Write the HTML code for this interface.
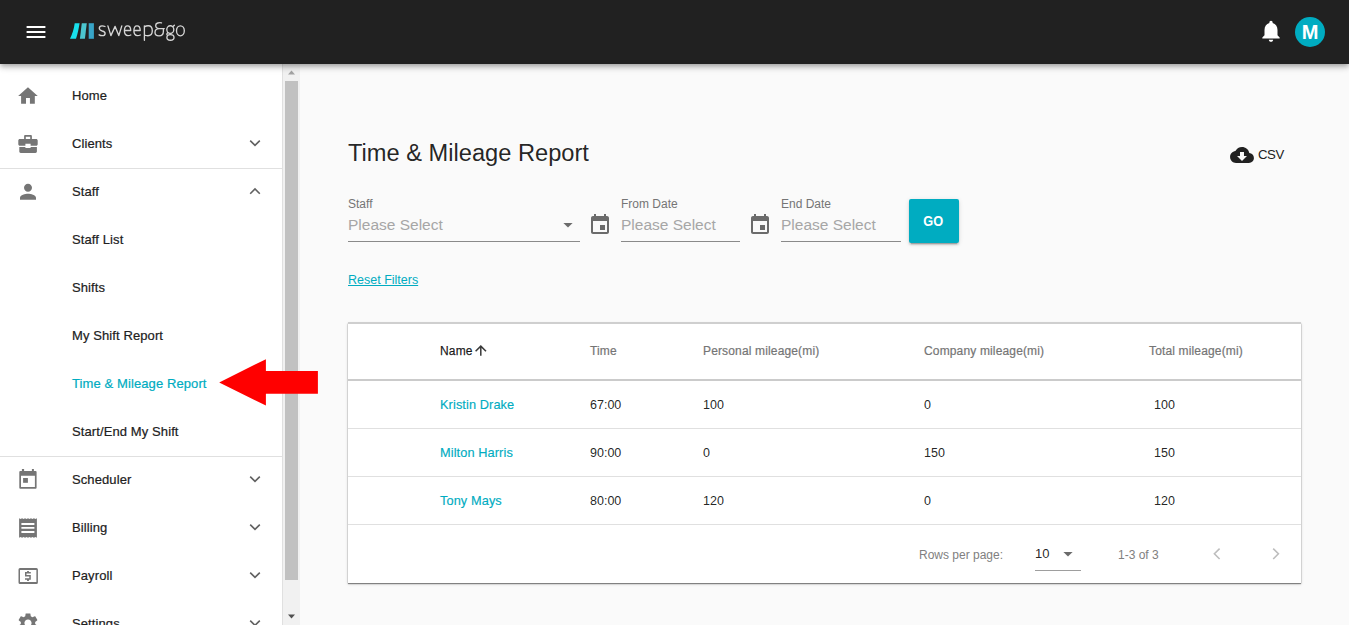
<!DOCTYPE html>
<html><head><meta charset="utf-8">
<style>
*{box-sizing:border-box;margin:0;padding:0}
html,body{width:1349px;height:625px;overflow:hidden;background:#fafafa;font-family:"Liberation Sans",sans-serif;color:rgba(0,0,0,.87)}
.abs{position:absolute}
#hdr{position:absolute;left:0;top:0;width:1349px;height:64px;background:#212121;box-shadow:0 2px 4px -1px rgba(0,0,0,.2),0 4px 5px 0 rgba(0,0,0,.14),0 1px 10px 0 rgba(0,0,0,.12);z-index:5}
#side{position:absolute;left:0;top:64px;width:283px;height:561px;background:#fff;border-right:1px solid #e0e0e0;z-index:2}
#sb{position:absolute;left:283px;top:64px;width:17px;height:561px;background:#f1f1f1;z-index:2}
.item{position:absolute;left:0;width:282px;height:48px;font-size:13px;line-height:50px;color:#212121;-webkit-text-stroke:0.2px currentColor;letter-spacing:0.1px}
.item .t{position:absolute;left:72px;top:0}
.item svg.ic{position:absolute;left:16px;top:12px}
.item svg.ch{position:absolute;left:243px;top:12px}
.div{position:absolute;left:0;width:282px;height:1px;background:#e0e0e0}
#main{position:absolute;left:300px;top:64px;width:1049px;height:561px}

.hd{position:absolute;top:0;height:56px;line-height:56px;font-size:12px;color:#757575;white-space:nowrap;-webkit-text-stroke:0.2px currentColor;letter-spacing:0.15px}
.cl{position:absolute;height:48px;line-height:48px;font-size:12.5px;color:rgba(0,0,0,.87);white-space:nowrap}
.lk{color:#00acc1;font-size:12.75px;letter-spacing:0.1px;-webkit-text-stroke:0.15px currentColor}
.ft{position:absolute;top:203px;height:58px;line-height:58px;font-size:12px;color:#808080;white-space:nowrap}
</style></head>
<body>
<div id="hdr">
  <svg class="abs" style="left:24px;top:20px" width="24" height="24" viewBox="0 0 24 24"><path fill="#fff" d="M2.6 18h18.8v-2H2.6zm0-5h18.8v-2H2.6zm0-7v2h18.8V6H2.6z"/></svg>
  <svg class="abs" style="left:0;top:0" width="200" height="50" viewBox="0 0 200 50">
<path fill="#19e0ec" d="M74.7 23.2H79.6C78.6 29 77.6 34 76 38.8H70C72.2 34 74 29 74.7 23.2z"/>
<path fill="#4bc6cf" d="M81.8 23.2H86.8L84.9 38.8H79.9z"/>
<path fill="#38a5c8" d="M88.7 23.2H93.9V38.8H88.7z"/>
<g fill="none" stroke="#d6d6d6" stroke-width="1.35" stroke-linecap="round" stroke-linejoin="round">
<path d="M105 26.5C104 26 103 25.8 102 25.8C100.3 25.8 99.3 26.8 99.3 28.3C99.3 30.1 100.8 30.6 102.3 31C104 31.4 105.1 32 105.1 33.4C105.1 34.9 104 35.6 102.2 35.6C101 35.6 100 35.3 99.1 34.8"/>
<path d="M107.9 25.9L110.9 35.6L115.1 26.4L118.8 35.6L121.8 25.9"/>
<path d="M124.4 30.5H130.7C130.7 27.5 129.5 25.8 127.5 25.8C125.5 25.8 124.4 27.8 124.4 30.8C124.4 34 125.6 35.6 128 35.6C129 35.6 130 35.4 130.8 35"/>
<path d="M133.9 30.5H140.2C140.2 27.5 139 25.8 137 25.8C135 25.8 133.9 27.8 133.9 30.8C133.9 34 135.1 35.6 137.5 35.6C138.5 35.6 139.5 35.4 140.3 35"/>
<path d="M144.4 25.8V40.2M144.4 26.9C145.5 26.1 146.8 25.7 148.2 25.7C151 25.7 152.3 27.8 152.3 30.7C152.3 33.8 150.8 35.7 147.8 35.7C146.5 35.7 145.3 35.4 144.4 35"/>
<path d="M161.5 22.8C159 22.5 155.7 22.8 155.7 25.3C155.7 27.4 157.5 28.6 159.2 28.6H164.3M159.2 28.6C156.6 28.6 155 30.4 155 32.5C155 34.8 156.8 35.8 159 35.8C161.5 35.8 163.4 34.5 163.4 31.2V28.6"/>
<ellipse cx="170.3" cy="29.6" rx="3.5" ry="3.9"/>
<path d="M173 26.6L174.4 25.2M167.8 32.6C167 33.3 166.8 34 166.9 34.6M170.3 34.6C168.3 34.6 166.9 35.6 166.9 37.5C166.9 39.3 168.3 40.2 170.4 40.2C172.6 40.2 174 39.3 174 37.4C174 35.6 172.6 34.6 170.3 34.6"/>
<ellipse cx="180.4" cy="30.8" rx="3.9" ry="5"/>
</g></svg>
  <svg class="abs" style="left:1258px;top:18px" width="26" height="26" viewBox="0 0 24 24"><path fill="#fff" d="M12 22c1.1 0 2-.9 2-2h-4c0 1.1.89 2 2 2zm6-6v-5c0-3.07-1.64-5.64-4.5-6.32V4c0-.83-.67-1.5-1.5-1.5s-1.5.67-1.5 1.5v.68C7.63 5.36 6 7.92 6 11v5l-2 2v1h16v-1l-2-2z"/></svg>
  <div class="abs" style="left:1295px;top:17px;width:30px;height:30px;border-radius:50%;background:#00acc1;color:#fff;font-size:20px;font-weight:bold;text-align:center;line-height:30px">M</div>
</div>

<div id="side">
<div class="item" style="top:7px"><svg class="ic" width="24" height="24" viewBox="0 0 24 24" fill="#757575"><path transform="translate(0.2,1.2) scale(0.98)" d="M10 20v-6h4v6h5v-8h3L12 3 2 12h3v8z"/></svg><span class="t">Home</span></div>
<div class="item" style="top:55px"><svg class="ic" width="24" height="24" viewBox="0 0 24 24" fill="#757575"><path fill-rule="evenodd" d="M8.1 8.1V5.2C8.1 4.5 8.6 4 9.3 4h5.4c.7 0 1.2.5 1.2 1.2v2.9h-1.7V5.8H9.8v2.3z"/><path d="M3.8 8.1h16.4c.8 0 1.5.7 1.5 1.5v3.7c0 .8-.7 1.5-1.5 1.5H14.6V12.7H9.4v2.1H3.8c-.8 0-1.5-.7-1.5-1.5V9.6c0-.8.7-1.5 1.5-1.5z"/><path d="M3.3 16.1h6.1v1h5.2v-1h6.3v4.4c0 .8-.6 1.4-1.4 1.4H4.7c-.8 0-1.4-.6-1.4-1.4z"/></svg><span class="t">Clients</span><svg class="ch" width="24" height="24" viewBox="0 0 24 24"><path d="M7.2 9.6L12 14.4L16.8 9.6" fill="none" stroke="#616161" stroke-width="1.6"/></svg></div>
<div class="item" style="top:103px"><svg class="ic" width="24" height="24" viewBox="0 0 24 24" fill="#757575"><path transform="translate(0,0.8)" d="M12 12c2.21 0 4-1.79 4-4s-1.79-4-4-4-4 1.79-4 4 1.790 4 4 4zm0 2c-2.67 0-8 1.34-8 4v2h16v-2c0-2.66-5.33-4-8-4z"/></svg><span class="t">Staff</span><svg class="ch" width="24" height="24" viewBox="0 0 24 24"><path d="M7.2 14.8L12 10L16.8 14.8" fill="none" stroke="#616161" stroke-width="1.6"/></svg></div>
<div class="item" style="top:151px"><span class="t">Staff List</span></div>
<div class="item" style="top:199px"><span class="t">Shifts</span></div>
<div class="item" style="top:247px"><span class="t">My Shift Report</span></div>
<div class="item" style="top:295px;color:#00acc1"><span class="t">Time &amp; Mileage Report</span></div>
<div class="item" style="top:343px"><span class="t">Start/End My Shift</span></div>
<div class="item" style="top:391px"><svg class="ic" width="24" height="24" viewBox="0 0 24 24" fill="#757575"><path d="M5.9 2.1h2.2V4.5H5.9zM15.9 2.1h2v2.4h-2z"/><path fill-rule="evenodd" d="M4.3 4h15.3a1 1 0 0 1 1 1v15.8a1 1 0 0 1-1 1H4.3a1 1 0 0 1-1-1V5a1 1 0 0 1 1-1zM5 8.8V20.1h13.9V8.8z"/><rect x="7.1" y="11" width="4.8" height="4.8"/></svg><span class="t">Scheduler</span><svg class="ch" width="24" height="24" viewBox="0 0 24 24"><path d="M7.2 9.6L12 14.4L16.8 9.6" fill="none" stroke="#616161" stroke-width="1.6"/></svg></div>
<div class="item" style="top:439px"><svg class="ic" width="24" height="24" viewBox="0 0 24 24" fill="#757575"><path fill-rule="evenodd" d="M3.10 3.30 L4.58 4.10 L6.07 3.30 L7.55 4.10 L9.03 3.30 L10.52 4.10 L12.00 3.30 L13.48 4.10 L14.97 3.30 L16.45 4.10 L17.93 3.30 L19.42 4.10 L20.90 3.30 L20.90 22.70 L19.42 21.90 L17.93 22.70 L16.45 21.90 L14.97 22.70 L13.48 21.90 L12.00 22.70 L10.52 21.90 L9.03 22.70 L7.55 21.90 L6.07 22.70 L4.58 21.90 L3.10 22.70z M5.4 8.1v1.9h13v-1.9zM5.4 12.1v1.7h13v-1.7zM5.4 16.1v1.8h13v-1.8z"/></svg><span class="t">Billing</span><svg class="ch" width="24" height="24" viewBox="0 0 24 24"><path d="M7.2 9.6L12 14.4L16.8 9.6" fill="none" stroke="#616161" stroke-width="1.6"/></svg></div>
<div class="item" style="top:487px"><svg class="ic" width="24" height="24" viewBox="0 0 24 24" fill="#757575"><path fill-rule="evenodd" d="M4 5h16.4a1.5 1.5 0 0 1 1.5 1.5v12.9a1.5 1.5 0 0 1-1.5 1.5H4a1.5 1.5 0 0 1-1.5-1.5V6.5A1.5 1.5 0 0 1 4 5zM4 7.1V18.9h16.4V7.1z"/><path d="M11.1 8.1h1.8V9h1.9v1.6H10.5v1.5h4.3v4.6H12.9v1.2h-1.8v-1.2H9v-1.5h4.3v-1.6H9V9h2.1z"/></svg><span class="t">Payroll</span><svg class="ch" width="24" height="24" viewBox="0 0 24 24"><path d="M7.2 9.6L12 14.4L16.8 9.6" fill="none" stroke="#616161" stroke-width="1.6"/></svg></div>
<div class="item" style="top:535px"><svg class="ic" width="24" height="24" viewBox="0 0 24 24" fill="#757575"><path d="M19.14 12.94c.04-.3.06-.61.06-.94 0-.32-.02-.64-.07-.94l2.03-1.58c.18-.14.23-.41.12-.61l-1.92-3.32c-.12-.22-.37-.29-.59-.22l-2.39.96c-.5-.38-1.03-.7-1.62-.94l-.36-2.54c-.04-.24-.24-.41-.48-.41h-3.84c-.24 0-.43.17-.47.41l-.36 2.54c-.59.24-1.13.57-1.62.94l-2.39-.96c-.22-.08-.47 0-.59.22L2.74 8.87c-.12.21-.08.47.12.61l2.03 1.58c-.05.3-.09.63-.09.94s.02.64.07.94l-2.03 1.58c-.18.14-.23.41-.12.61l1.92 3.32c.12.22.37.29.59.22l2.39-.96c.5.38 1.03.7 1.62.94l.36 2.54c.05.24.24.41.48.41h3.84c.24 0 .44-.17.47-.41l.36-2.54c.59-.24 1.13-.56 1.62-.94l2.39.96c.22.08.47 0 .59-.22l1.92-3.32c.12-.22.07-.47-.12-.61l-2.01-1.58zM12 15.6c-1.98 0-3.6-1.62-3.6-3.6s1.62-3.6 3.6-3.6 3.6 1.62 3.6 3.6-1.62 3.6-3.6 3.6z"/></svg><span class="t">Settings</span><svg class="ch" width="24" height="24" viewBox="0 0 24 24"><path d="M7.2 9.6L12 14.4L16.8 9.6" fill="none" stroke="#616161" stroke-width="1.6"/></svg></div>
<div class="div" style="top:104px"></div>
<div class="div" style="top:392px"></div>
</div>
<div id="sb">
<svg class="abs" style="left:5px;top:6px" width="8" height="5" viewBox="0 0 8 5"><path fill="#a3a3a3" d="M0 4.5L3.5 0.5L7 4.5z"/></svg>
<div class="abs" style="left:2px;top:17px;width:13px;height:499px;background:#c1c1c1"></div>
<svg class="abs" style="left:5px;top:550px" width="8" height="5" viewBox="0 0 8 5"><path fill="#505050" d="M0 0.5L3.5 4.5L7 0.5z"/></svg>
</div>
<svg class="abs" style="left:0;top:0;z-index:6" width="330" height="420" viewBox="0 0 330 420"><path fill="#ff0000" d="M219.2 382.4L265.9 359.2V371.1H317.9V393.7H265.9V405.6z"/></svg>

<div id="main">
<div class="abs" style="left:48px;top:75px;font-size:23.65px;line-height:28px;color:rgba(0,0,0,.87)">Time &amp; Mileage Report</div>

<div class="abs" style="left:930px;top:83px;width:24px;height:16px">
<svg width="24" height="16" viewBox="0 0 24 16.1" style="position:absolute;left:0;top:0"><path fill="#212121" d="M19.35 6.04C18.67 2.59 15.64 0 12 0 9.11 0 6.6 1.64 5.35 4.04 2.34 4.36 0 6.91 0 10c0 3.31 2.69 6 6 6h13c2.76 0 5-2.24 5-5 0-2.64-2.05-4.78-4.65-4.96zM17 9l-5 5-5-5h3V5h4v4h3z"/></svg>
</div>
<div class="abs" style="left:958px;top:83px;font-size:13.2px;line-height:16px;letter-spacing:-0.4px;color:#212121">CSV</div>

<!-- Staff field -->
<div class="abs" style="left:48px;top:133px;font-size:12px;line-height:14px;color:#757575">Staff</div>
<div class="abs" style="left:48px;top:152px;font-size:15.5px;line-height:18px;color:#a6a6a6">Please Select</div>
<div class="abs" style="left:48px;top:177px;width:232px;height:1px;background:#8a8a8a"></div>
<svg class="abs" style="left:556px;top:213px" width="24" height="24" viewBox="0 0 24 24"></svg>
<svg class="abs" style="left:256px;top:149px" width="24" height="24" viewBox="0 0 24 24"><path fill="#6b6b6b" d="M7.4 10l4.6 4.6 4.6-4.6z"/></svg>
<svg class="abs" style="left:288px;top:149px" width="24" height="24" viewBox="0 0 24 24"><path fill="#6b6b6b" d="M17 12h-5v5h5v-5zM16 1v2H8V1H6v2H5c-1.11 0-1.99.9-1.99 2L3 19c0 1.1.89 2 2 2h14c1.1 0 2-.9 2-2V5c0-1.1-.9-2-2-2h-1V1h-2zm3 18H5V8h14v11z"/></svg>

<!-- From date -->
<div class="abs" style="left:321px;top:133px;font-size:12px;line-height:14px;color:#757575">From Date</div>
<div class="abs" style="left:321px;top:152px;font-size:15.5px;line-height:18px;color:#a6a6a6">Please Select</div>
<div class="abs" style="left:321px;top:177px;width:119px;height:1px;background:#8a8a8a"></div>
<svg class="abs" style="left:448px;top:149px" width="24" height="24" viewBox="0 0 24 24"><path fill="#6b6b6b" d="M17 12h-5v5h5v-5zM16 1v2H8V1H6v2H5c-1.11 0-1.990.9-1.99 2L3 19c0 1.1.89 2 2 2h14c1.1 0 2-.9 2-2V5c0-1.1-.9-2-2-2h-1V1h-2zm3 18H5V8h14v11z"/></svg>

<!-- End date -->
<div class="abs" style="left:481px;top:133px;font-size:12px;line-height:14px;color:#757575">End Date</div>
<div class="abs" style="left:481px;top:152px;font-size:15.5px;line-height:18px;color:#a6a6a6">Please Select</div>
<div class="abs" style="left:481px;top:177px;width:120px;height:1px;background:#8a8a8a"></div>

<div class="abs" style="left:609px;top:135px;width:50px;height:44px;background:#00acc1;border-radius:2px;box-shadow:0 3px 1px -2px rgba(0,0,0,.2),0 2px 2px 0 rgba(0,0,0,.14),0 1px 5px 0 rgba(0,0,0,.12);color:#fff;font-weight:bold;font-size:14.5px;line-height:44px;padding-right:2px;text-align:center"><span style="display:inline-block;transform:scaleX(0.88)">GO</span></div>

<div class="abs" style="left:48px;top:209px;font-size:12.5px;line-height:15px;color:#00acc1;text-decoration:underline">Reset Filters</div>

<!-- table card -->
<div class="abs" style="left:48px;top:259px;width:953px;height:260px;background:#fff;box-shadow:0 1px 1px 0 rgba(0,0,0,.4),0 1px 3px 0 rgba(0,0,0,.18),0 0 1px 0 rgba(0,0,0,.2)">
  <div class="abs" style="left:0;top:-1px;width:953px;height:2px;background:#cfcfcf"></div>
  <div class="abs" style="left:0;top:56px;width:953px;height:2px;background:#cbcbcb"></div>
  <div class="abs" style="left:0;top:105px;width:953px;height:1px;background:#e0e0e0"></div>
  <div class="abs" style="left:0;top:153px;width:953px;height:1px;background:#e0e0e0"></div>
  <div class="abs" style="left:0;top:201px;width:953px;height:1px;background:#e0e0e0"></div>
  <div class="hd" style="left:92px;color:rgba(0,0,0,.87);-webkit-text-stroke:0.25px currentColor">Name<svg style="position:absolute;left:34px;top:21px" width="14" height="14" viewBox="0 0 14 14"><path d="M6.8 2.3V11.8M1.6 7.3L6.8 2.1L12 7.3" fill="none" stroke="#3a3a3a" stroke-width="1.5"/></svg></div>
  <div class="hd" style="left:242px">Time</div>
  <div class="hd" style="left:355px">Personal mileage(mi)</div>
  <div class="hd" style="left:576px">Company mileage(mi)</div>
  <div class="hd" style="left:801px">Total mileage(mi)</div>

  <div class="cl lk" style="left:92px;top:58px">Kristin Drake</div>
  <div class="cl" style="left:242px;top:58px">67:00</div>
  <div class="cl" style="left:355px;top:58px">100</div>
  <div class="cl" style="left:576px;top:58px">0</div>
  <div class="cl" style="left:806px;top:58px">100</div>

  <div class="cl lk" style="left:92px;top:106px">Milton Harris</div>
  <div class="cl" style="left:242px;top:106px">90:00</div>
  <div class="cl" style="left:355px;top:106px">0</div>
  <div class="cl" style="left:576px;top:106px">150</div>
  <div class="cl" style="left:806px;top:106px">150</div>

  <div class="cl lk" style="left:92px;top:154px">Tony Mays</div>
  <div class="cl" style="left:242px;top:154px">80:00</div>
  <div class="cl" style="left:355px;top:154px">120</div>
  <div class="cl" style="left:576px;top:154px">0</div>
  <div class="cl" style="left:806px;top:154px">120</div>

  <div class="ft" style="left:571px">Rows per page:</div>
  <div class="ft" style="left:687px;top:202px;color:rgba(0,0,0,.87);font-size:13px">10</div>
  <svg class="abs" style="left:708px;top:219px" width="24" height="24" viewBox="0 0 24 24"><path fill="#6b6b6b" d="M7.4 10l4.6 4.6 4.6-4.6z"/></svg>
  <div class="abs" style="left:687px;top:247px;width:46px;height:1px;background:#9e9e9e"></div>
  <div class="ft" style="left:770px">1-3 of 3</div>
  <svg class="abs" style="left:857px;top:218px" width="24" height="24" viewBox="0 0 24 24"><path d="M14.6 7.6L9.4 12.8L14.6 18" fill="none" stroke="#bdbdbd" stroke-width="1.6"/></svg>
  <svg class="abs" style="left:915px;top:218px" width="24" height="24" viewBox="0 0 24 24"><path d="M10.2 7.6L15.4 12.8L10.2 18" fill="none" stroke="#bdbdbd" stroke-width="1.6"/></svg>
</div>
</div>
</body></html>
